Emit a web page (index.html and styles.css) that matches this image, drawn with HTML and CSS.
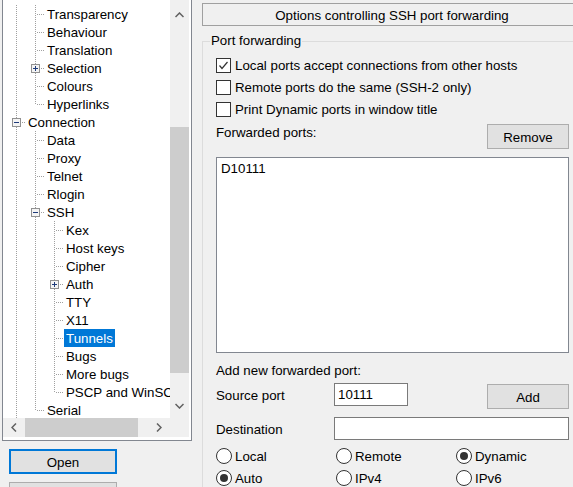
FILE: index.html
```html
<!DOCTYPE html>
<html>
<head>
<meta charset="utf-8">
<title>PuTTY Configuration - Tunnels</title>
<link rel="stylesheet" href="styles.css">
</head>
<body>
<div class="window">
  <div class="left">
    <div class="tree">
      <div class="tree-items">
        <div class="row"><span class="cell v"></span><span class="cell t"></span><span class="label">Transparency</span></div>
        <div class="row"><span class="cell v"></span><span class="cell t"></span><span class="label">Behaviour</span></div>
        <div class="row"><span class="cell v"></span><span class="cell t"></span><span class="label">Translation</span></div>
        <div class="row"><span class="cell v"></span><span class="cell t"><svg class="exp" width="9" height="9" viewBox="0 0 9 9"><rect x="0.5" y="0.5" width="8" height="8" fill="#f4f4f4" stroke="#919191"/><path d="M2 4.5H7M4.5 2V7" stroke="#1e3b7a" stroke-width="1"/></svg></span><span class="label">Selection</span></div>
        <div class="row"><span class="cell v"></span><span class="cell t"></span><span class="label">Colours</span></div>
        <div class="row"><span class="cell v"></span><span class="cell l"></span><span class="label">Hyperlinks</span></div>
        <div class="row"><span class="cell t"><svg class="exp" width="9" height="9" viewBox="0 0 9 9"><rect x="0.5" y="0.5" width="8" height="8" fill="#f4f4f4" stroke="#919191"/><path d="M2 4.5H7" stroke="#1e3b7a" stroke-width="1"/></svg></span><span class="label">Connection</span></div>
        <div class="row"><span class="cell v"></span><span class="cell t"></span><span class="label">Data</span></div>
        <div class="row"><span class="cell v"></span><span class="cell t"></span><span class="label">Proxy</span></div>
        <div class="row"><span class="cell v"></span><span class="cell t"></span><span class="label">Telnet</span></div>
        <div class="row"><span class="cell v"></span><span class="cell t"></span><span class="label">Rlogin</span></div>
        <div class="row"><span class="cell v"></span><span class="cell t"><svg class="exp" width="9" height="9" viewBox="0 0 9 9"><rect x="0.5" y="0.5" width="8" height="8" fill="#f4f4f4" stroke="#919191"/><path d="M2 4.5H7" stroke="#1e3b7a" stroke-width="1"/></svg></span><span class="label">SSH</span></div>
        <div class="row"><span class="cell v"></span><span class="cell v"></span><span class="cell t"></span><span class="label">Kex</span></div>
        <div class="row"><span class="cell v"></span><span class="cell v"></span><span class="cell t"></span><span class="label">Host keys</span></div>
        <div class="row"><span class="cell v"></span><span class="cell v"></span><span class="cell t"></span><span class="label">Cipher</span></div>
        <div class="row"><span class="cell v"></span><span class="cell v"></span><span class="cell t"><svg class="exp" width="9" height="9" viewBox="0 0 9 9"><rect x="0.5" y="0.5" width="8" height="8" fill="#f4f4f4" stroke="#919191"/><path d="M2 4.5H7M4.5 2V7" stroke="#1e3b7a" stroke-width="1"/></svg></span><span class="label">Auth</span></div>
        <div class="row"><span class="cell v"></span><span class="cell v"></span><span class="cell t"></span><span class="label">TTY</span></div>
        <div class="row"><span class="cell v"></span><span class="cell v"></span><span class="cell t"></span><span class="label">X11</span></div>
        <div class="row"><span class="cell v"></span><span class="cell v"></span><span class="cell t"></span><span class="label selected">Tunnels</span></div>
        <div class="row"><span class="cell v"></span><span class="cell v"></span><span class="cell t"></span><span class="label">Bugs</span></div>
        <div class="row"><span class="cell v"></span><span class="cell v"></span><span class="cell t"></span><span class="label">More bugs</span></div>
        <div class="row"><span class="cell v"></span><span class="cell v"></span><span class="cell l"></span><span class="label">PSCP and WinSCP</span></div>
        <div class="row"><span class="cell v"></span><span class="cell l"></span><span class="label">Serial</span></div>
      </div>
      <div class="vscroll">
        <div class="arrow up"><svg width="9" height="6" viewBox="0 0 9 6"><polyline points="0.5,5 4.5,1 8.5,5" fill="none" stroke="#606060" stroke-width="1.5"/></svg></div>
        <div class="thumb-v"></div>
        <div class="arrow down"><svg width="9" height="6" viewBox="0 0 9 6"><polyline points="0.5,1 4.5,5 8.5,1" fill="none" stroke="#606060" stroke-width="1.5"/></svg></div>
      </div>
      <div class="hscroll">
        <div class="harrow left-a"><svg width="6" height="9" viewBox="0 0 6 9"><polyline points="5,0.5 1,4.5 5,8.5" fill="none" stroke="#606060" stroke-width="1.5"/></svg></div>
        <div class="thumb-h"></div>
        <div class="harrow right-a"><svg width="6" height="9" viewBox="0 0 6 9"><polyline points="1,0.5 5,4.5 1,8.5" fill="none" stroke="#606060" stroke-width="1.5"/></svg></div>
      </div>
      <div class="corner"></div>
    </div>
    <button class="btn open">Open</button>
    <button class="btn second" aria-label="Cancel"></button>
  </div>

  <div class="right">
    <div class="header">Options controlling SSH port forwarding</div>
    <fieldset class="group">
      <legend>Port forwarding</legend>
      <div class="content">
        <div class="check"><span class="cbox"><svg width="13" height="13" viewBox="0 0 13 13"><polyline points="2.5,6.5 5,9.5 10.5,3" fill="none" stroke="#333" stroke-width="1.2"/></svg></span><span class="txt">Local ports accept connections from other hosts</span></div>
        <div class="check"><span class="cbox"></span><span class="txt">Remote ports do the same (SSH-2 only)</span></div>
        <div class="check"><span class="cbox"></span><span class="txt">Print Dynamic ports in window title</span></div>
        <div class="fwd-row"><span class="fwd-label">Forwarded ports:</span><button class="btn small">Remove</button></div>
        <div class="list"><div>D10111</div></div>
        <div class="add-title">Add new forwarded port:</div>
        <div class="form-row source">
          <span class="lbl">Source port</span>
          <div class="input port">10111</div>
          <button class="btn small add">Add</button>
        </div>
        <div class="form-row dest">
          <span class="lbl">Destination</span>
          <div class="input wide"></div>
        </div>
        <div class="radios">
          <div class="radio"><span class="rbtn"></span><span class="rtxt">Local</span></div>
          <div class="radio"><span class="rbtn"></span><span class="rtxt">Remote</span></div>
          <div class="radio"><span class="rbtn on"></span><span class="rtxt">Dynamic</span></div>
          <div class="radio"><span class="rbtn on"></span><span class="rtxt">Auto</span></div>
          <div class="radio"><span class="rbtn"></span><span class="rtxt">IPv4</span></div>
          <div class="radio"><span class="rbtn"></span><span class="rtxt">IPv6</span></div>
        </div>
      </div>
    </fieldset>
  </div>
</div>
</body>
</html>
```

FILE: styles.css
```css
html, body {
  margin: 0;
  padding: 0;
}
body {
  width: 573px;
  height: 487px;
  overflow: hidden;
  background: #f0f0f0;
  font-family: "Liberation Sans", Arial, sans-serif;
  font-size: 13.3px;
  line-height: 16px;
  color: #000;
}
.window {
  display: flex;
  gap: 10px;
  padding-left: 2px;
}

/* ---------- left: tree ---------- */
.left {
  width: 190px;
  flex: none;
  display: flex;
  flex-direction: column;
  align-items: flex-start;
}
.tree {
  width: 190px;
  height: 441px;
  box-sizing: border-box;
  border: 1px solid #828790;
  border-top: none;
  background: #fff;
  display: grid;
  grid-template-columns: 167px 19px;
  grid-template-rows: 418px 19px;
}
.tree-items {
  overflow: hidden;
  white-space: nowrap;
  padding: 5px 0 0 3px;
}
.row {
  display: flex;
  height: 18px;
}
.cell {
  width: 19px;
  height: 18px;
  flex: none;
  display: flex;
  align-items: flex-start;
  background-repeat: no-repeat;
}
.cell.v {
  background-image: repeating-linear-gradient(to bottom, #a0a0a0 0 1px, transparent 1px 2px);
  background-position: 10px 0;
  background-size: 1px 18px;
}
.cell.t {
  background-image: repeating-linear-gradient(to bottom, #a0a0a0 0 1px, transparent 1px 2px),
                    repeating-linear-gradient(to right, #a0a0a0 0 1px, transparent 1px 2px);
  background-position: 10px 0, 12px 9px;
  background-size: 1px 18px, 7px 1px;
}
.cell.l {
  background-image: repeating-linear-gradient(to bottom, #a0a0a0 0 1px, transparent 1px 2px),
                    repeating-linear-gradient(to right, #a0a0a0 0 1px, transparent 1px 2px);
  background-position: 10px 0, 12px 9px;
  background-size: 1px 10px, 7px 1px;
}
.exp {
  display: block;
  margin: 5px 0 0 6px;
}
.label {
  height: 18px;
  box-sizing: border-box;
  line-height: 16px;
  margin-left: 1px;
  padding: 2px 2px 0 2px;
}
.label.selected {
  background: #0078d7;
  color: #fff;
}
.vscroll {
  grid-column: 2;
  grid-row: 1;
  background: #f0f0f0;
  display: flex;
  flex-direction: column;
}
.arrow {
  display: flex;
  align-items: center;
  justify-content: center;
}
.arrow.up { height: 30px; }
.arrow.down { height: 24px; margin-top: auto; }
.thumb-v {
  margin-top: 97px;
  height: 246px;
  background: #cdcdcd;
}
.hscroll {
  grid-column: 1;
  grid-row: 2;
  background: #f0f0f0;
  display: flex;
}
.harrow {
  display: flex;
  align-items: center;
  justify-content: center;
}
.left-a { width: 22px; }
.right-a { width: 23px; margin-left: auto; }
.thumb-h {
  width: 113px;
  background: #cdcdcd;
}
.corner {
  grid-column: 2;
  grid-row: 2;
  background: #f0f0f0;
}

/* ---------- buttons ---------- */
.btn {
  font: inherit;
  color: #000;
  background: #e1e1e1;
  border: 1px solid #adadad;
  padding: 2px 0 0;
  margin: 0;
  box-sizing: border-box;
  height: 25px;
}
.open {
  width: 108px;
  margin: 8px 0 0 7px;
  border: 2px solid #0078d7;
}
.second {
  width: 108px;
  margin: 8px 0 0 7px;
}
.small {
  width: 82px;
}

/* ---------- right panel ---------- */
.right {
  width: 380px;
  flex: none;
  padding-top: 3px;
}
.header {
  height: 23px;
  box-sizing: border-box;
  border: 1px solid #a0a0a0;
  text-align: center;
  padding-top: 2px;
  line-height: 19px;
}
.group {
  margin: 7px 0 0;
  padding: 5px 10px 40px 13px;
  border: 1px solid #dcdcdc;
  min-width: 0;
}
.group legend {
  padding: 0 1px;
  margin-left: -6px;
  line-height: 16px;
}
.content {
  width: 353px;
}
.txt {
  padding-top: 2px;
  line-height: 16px;
}
.rtxt {
  padding-top: 1px;
  line-height: 16px;
}
.check {
  display: flex;
  align-items: center;
  height: 22px;
}
.cbox {
  width: 15px;
  height: 15px;
  box-sizing: border-box;
  border: 1px solid #333;
  background: #fff;
  margin-right: 4px;
  display: flex;
  align-items: center;
  justify-content: center;
}
.cbox svg { display: block; }
.fwd-row {
  display: flex;
  justify-content: space-between;
  align-items: flex-start;
  height: 29px;
}
.fwd-label { padding-top: 5px; }
.fwd-row .btn { margin-top: 4px; }
.list {
  margin-top: 8px;
  height: 196px;
  box-sizing: border-box;
  border: 1px solid #828790;
  background: #fff;
  padding: 3px 4px;
}
.add-title {
  margin-top: 10px;
}
.form-row {
  display: flex;
  align-items: flex-start;
}
.form-row.source { margin-top: 4px; height: 26px; }
.form-row.dest { margin-top: 8px; }
.lbl {
  width: 118px;
  flex: none;
  padding-top: 1px;
  line-height: 23px;
}
.input {
  height: 23px;
  box-sizing: border-box;
  border: 1px solid #7a7a7a;
  background: #fff;
  padding: 3px 3px 0;
}
.input.port { width: 74px; }
.input.wide { width: 235px; }
.add {
  margin-left: auto;
  margin-top: 1px;
}
.radios {
  margin-top: 4px;
  display: grid;
  grid-template-columns: 120px 120px 1fr;
  grid-auto-rows: 22px;
}
.radio {
  display: flex;
  align-items: center;
}
.rbtn {
  width: 16px;
  height: 16px;
  box-sizing: border-box;
  border: 1px solid #333;
  border-radius: 50%;
  background: #fff;
  margin-right: 3px;
  display: flex;
  align-items: center;
  justify-content: center;
}
.rbtn.on::after {
  content: "";
  width: 8px;
  height: 8px;
  border-radius: 50%;
  background: #333;
}
```
